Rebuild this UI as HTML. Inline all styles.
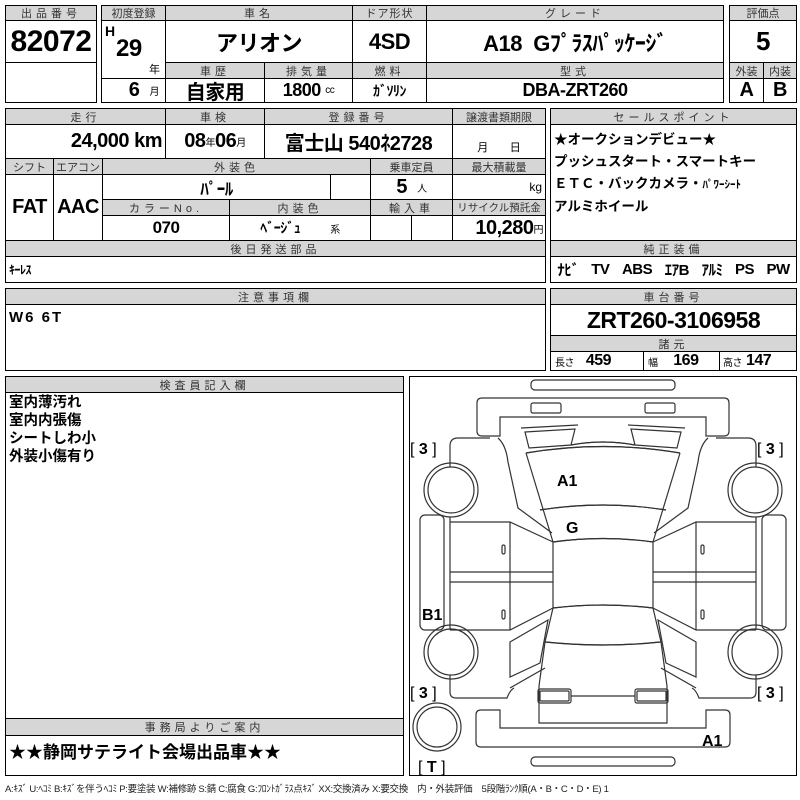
<!DOCTYPE html>
<html><head><meta charset="utf-8"><style>
*{margin:0;padding:0;box-sizing:border-box}
body{width:800px;height:800px;background:#fff;position:relative;overflow:hidden;font-family:"Liberation Sans","Noto Sans CJK JP",sans-serif;color:#000}
.c{position:absolute;border:1px solid #000;background:#fff;display:flex;align-items:center;justify-content:center;white-space:nowrap;overflow:hidden}
.h{background:#d6d6d6;font-size:11px;letter-spacing:4px;color:#333;font-weight:normal}
.v{font-weight:bold;font-size:20px;letter-spacing:-0.5px}
.s{font-size:10px;font-weight:normal}
.l{justify-content:flex-start;align-items:flex-start;padding-left:3px}
</style></head><body>
<!-- block1 -->
<div class="c h" style="left:5px;top:5px;width:92px;height:16px">出品番号</div>
<div class="c v" style="left:5px;top:20px;width:92px;height:43px;font-size:30px">82072</div>
<div class="c" style="left:5px;top:62px;width:92px;height:41px"></div>
<!-- block2 headers -->
<div class="c h" style="left:101px;top:5px;width:65px;height:16px;letter-spacing:0">初度登録</div>
<div class="c h" style="left:165px;top:5px;width:188px;height:16px">車名</div>
<div class="c h" style="left:352px;top:5px;width:75px;height:16px;letter-spacing:1px">ドア形状</div>
<div class="c h" style="left:426px;top:5px;width:298px;height:16px">グレード</div>
<div class="c v" style="left:101px;top:20px;width:65px;height:59px;display:block">
 <span style="position:absolute;left:3px;top:2px;font-size:14px">H</span>
 <span style="position:absolute;left:14px;top:14px;font-size:24px">29</span>
 <span style="position:absolute;left:47px;top:40px;font-size:11px;font-weight:normal">年</span></div>
<div class="c v" style="left:101px;top:78px;width:65px;height:25px;justify-content:flex-end;padding-right:6px">6&nbsp;&nbsp;<span class="s">月</span></div>
<div class="c v" style="left:165px;top:20px;width:188px;height:43px;font-size:22px">アリオン</div>
<div class="c v" style="left:352px;top:20px;width:75px;height:43px;font-size:22px">4SD</div>
<div class="c v" style="left:426px;top:20px;width:298px;height:43px;font-size:22px">A18&nbsp;&nbsp;Gﾌﾟﾗｽﾊﾟｯｹｰｼﾞ</div>
<div class="c h" style="left:165px;top:62px;width:100px;height:17px">車歴</div>
<div class="c h" style="left:264px;top:62px;width:89px;height:17px">排気量</div>
<div class="c h" style="left:352px;top:62px;width:75px;height:17px">燃料</div>
<div class="c h" style="left:426px;top:62px;width:298px;height:17px">型式</div>
<div class="c v" style="left:165px;top:78px;width:100px;height:25px">自家用</div>
<div class="c v" style="left:264px;top:78px;width:89px;height:25px;font-size:18px">1800&nbsp;<span class="s">cc</span></div>
<div class="c v" style="left:352px;top:78px;width:75px;height:25px;font-size:14px">ｶﾞｿﾘﾝ</div>
<div class="c v" style="left:426px;top:78px;width:298px;height:25px;font-size:18px">DBA-ZRT260</div>
<!-- block3 -->
<div class="c h" style="left:729px;top:5px;width:68px;height:16px;letter-spacing:0">評価点</div>
<div class="c v" style="left:729px;top:20px;width:68px;height:43px;font-size:26px">5</div>
<div class="c h" style="left:729px;top:62px;width:35px;height:17px;letter-spacing:0">外装</div>
<div class="c h" style="left:763px;top:62px;width:34px;height:17px;letter-spacing:0">内装</div>
<div class="c v" style="left:729px;top:78px;width:35px;height:25px">A</div>
<div class="c v" style="left:763px;top:78px;width:34px;height:25px">B</div>
<!-- second block -->
<div class="c h" style="left:5px;top:108px;width:161px;height:17px">走行</div>
<div class="c h" style="left:165px;top:108px;width:100px;height:17px">車検</div>
<div class="c h" style="left:264px;top:108px;width:189px;height:17px">登録番号</div>
<div class="c h" style="left:452px;top:108px;width:94px;height:17px;letter-spacing:0">譲渡書類期限</div>
<div class="c v" style="left:5px;top:124px;width:161px;height:35px;justify-content:flex-end;padding-right:3px">24,000 km</div>
<div class="c v" style="left:165px;top:124px;width:100px;height:35px">08<span class="s">年</span>06<span class="s">月</span></div>
<div class="c v" style="left:264px;top:124px;width:189px;height:35px">富士山 540ﾈ2728</div>
<div class="c s" style="left:452px;top:124px;width:94px;height:35px;align-items:flex-end;padding-bottom:3px;font-size:11px">月&nbsp;&nbsp;&nbsp;&nbsp;&nbsp;&nbsp;&nbsp;日</div>
<div class="c h" style="left:5px;top:158px;width:49px;height:17px;letter-spacing:0">シフト</div>
<div class="c h" style="left:53px;top:158px;width:50px;height:17px;letter-spacing:0">エアコン</div>
<div class="c h" style="left:102px;top:158px;width:269px;height:17px">外装色</div>
<div class="c h" style="left:370px;top:158px;width:83px;height:17px;letter-spacing:0">乗車定員</div>
<div class="c h" style="left:452px;top:158px;width:94px;height:17px;letter-spacing:0">最大積載量</div>
<div class="c v" style="left:5px;top:174px;width:49px;height:67px">FAT</div>
<div class="c v" style="left:53px;top:174px;width:50px;height:67px">AAC</div>
<div class="c v" style="left:102px;top:174px;width:229px;height:26px;font-size:17px">ﾊﾟｰﾙ</div>
<div class="c" style="left:330px;top:174px;width:41px;height:26px"></div>
<div class="c v" style="left:370px;top:174px;width:83px;height:26px">5&nbsp;&nbsp;<span class="s">人</span></div>
<div class="c s" style="left:452px;top:174px;width:94px;height:26px;justify-content:flex-end;padding-right:3px;font-size:12px">kg</div>
<div class="c h" style="left:102px;top:199px;width:128px;height:17px">カラーNo.</div>
<div class="c h" style="left:229px;top:199px;width:142px;height:17px">内装色</div>
<div class="c h" style="left:370px;top:199px;width:83px;height:17px">輸入車</div>
<div class="c h" style="left:452px;top:199px;width:94px;height:17px;letter-spacing:0;font-size:10.5px">リサイクル預託金</div>
<div class="c v" style="left:102px;top:215px;width:128px;height:26px;font-size:17px">070</div>
<div class="c v" style="left:229px;top:215px;width:142px;height:26px;font-size:14px">ﾍﾞｰｼﾞｭ<span class="s" style="margin-left:30px">系</span></div>
<div class="c" style="left:370px;top:215px;width:42px;height:26px"></div>
<div class="c" style="left:411px;top:215px;width:42px;height:26px"></div>
<div class="c v" style="left:452px;top:215px;width:94px;height:26px;justify-content:flex-end;padding-right:2px">10,280<span class="s">円</span></div>
<div class="c h" style="left:5px;top:240px;width:541px;height:17px">後日発送部品</div>
<div class="c v l" style="left:5px;top:256px;width:541px;height:27px;font-size:12px;align-items:center">ｷｰﾚｽ</div>
<!-- sale point -->
<div class="c h" style="left:550px;top:108px;width:247px;height:17px">セールスポイント</div>
<div class="c l" style="left:550px;top:124px;width:247px;height:117px;display:block;font-weight:bold;font-size:13.5px;line-height:22px;padding-top:4px">★オークションデビュー★<br>プッシュスタート・スマートキー<br>ＥＴＣ・バックカメラ・<span style="font-size:11px">ﾊﾟﾜｰｼｰﾄ</span><br>アルミホイール</div>
<div class="c h" style="left:550px;top:240px;width:247px;height:17px">純正装備</div>
<div class="c v" style="left:550px;top:256px;width:247px;height:27px;font-size:15px;justify-content:space-around">ﾅﾋﾞ <span>TV</span> <span>ABS</span> <span>ｴｱB</span> <span>ｱﾙﾐ</span> <span>PS</span> <span>PW</span></div>
<!-- chui -->
<div class="c h" style="left:5px;top:288px;width:541px;height:17px">注意事項欄</div>
<div class="c v l" style="left:5px;top:304px;width:541px;height:67px;font-size:15px;padding-top:4px;letter-spacing:2px">W6 6T</div>
<div class="c h" style="left:550px;top:288px;width:247px;height:17px">車台番号</div>
<div class="c v" style="left:550px;top:304px;width:247px;height:32px;font-size:23px">ZRT260-3106958</div>
<div class="c h" style="left:550px;top:335px;width:247px;height:17px">諸元</div>
<div class="c v" style="left:550px;top:351px;width:94px;height:20px;font-size:16px;justify-content:flex-start;padding-left:4px"><span class="s">長さ</span>&nbsp;&nbsp;&nbsp;459</div>
<div class="c v" style="left:643px;top:351px;width:77px;height:20px;font-size:16px;justify-content:flex-start;padding-left:4px"><span class="s">幅</span>&nbsp;&nbsp;&nbsp;&nbsp;169</div>
<div class="c v" style="left:719px;top:351px;width:78px;height:20px;font-size:16px;justify-content:flex-start;padding-left:3px"><span class="s">高さ</span>&nbsp;147</div>
<!-- kensa -->
<div class="c h" style="left:5px;top:376px;width:399px;height:17px">検査員記入欄</div>
<div class="c l" style="left:5px;top:392px;width:399px;height:327px;display:block;font-weight:bold;font-size:14.5px;line-height:18px;padding-top:1px">室内薄汚れ<br>室内内張傷<br>シートしわ小<br>外装小傷有り</div>
<div class="c h" style="left:5px;top:718px;width:399px;height:18px">事務局よりご案内</div>
<div class="c l" style="left:5px;top:735px;width:399px;height:41px;font-weight:bold;font-size:17px;padding-top:2px">★★静岡サテライト会場出品車★★</div>
<!-- diagram -->
<div class="c" style="left:409px;top:376px;width:388px;height:400px"></div>
<svg style="position:absolute;left:0;top:0" width="800" height="800" fill="none" stroke="#333" stroke-width="1.2">
<g id="half">
<path d="M603,417 L500,417 L500,436 L482,436 Q477,436 477,431 L477,403 Q477,398 482,398 L603,398"/>
<rect x="531" y="403" width="30" height="10" rx="2"/>
<path d="M490,438 L458,438 Q450,438 450,446 L450,467"/>
<path d="M498,438 Q506,445 508,462 L518,508 L552,533"/>
<path d="M521,428 L578,425"/>
<path d="M525,432 L575,429 L571,445 L529,448 Z"/>
<path d="M571,445 Q603,439 635,445"/>
<path d="M526,453 Q603,440 680,453"/>
<path d="M526,453 L553,542"/>
<path d="M540,510 Q603,500 666,510"/>
<path d="M553,542 Q603,535 653,542"/>
<circle cx="451" cy="490" r="27"/><circle cx="451" cy="490" r="23"/>
<rect x="420" y="515" width="24" height="115" rx="5"/>
<path d="M450,517 L450,630"/>
<path d="M450,522 L510,522 L553,542"/>
<path d="M510,522 L510,630"/>
<path d="M450,572 L553,572 M450,582 L553,582"/>
<path d="M450,630 L510,630 L553,608"/>
<rect x="502" y="545" width="3" height="9" rx="1.5"/><rect x="502" y="610" width="3" height="9" rx="1.5"/>
<path d="M553,542 L553,608"/>
<path d="M553,608 Q603,602 653,608"/>
<path d="M510,642 L548,620 L540,663 L510,677 Z"/>
<path d="M510,688 L545,668"/>
<path d="M553,608 L545,642 L539,686 L539,723 L603,723"/>
<path d="M545,642 Q603,648 660,642"/>
<circle cx="451" cy="652" r="27"/><circle cx="451" cy="652" r="23"/>
<path d="M450,675 L450,692 Q450,698 456,698 L507,698 Q510,690 514,688"/>
<rect x="538" y="689" width="33" height="14" rx="2"/><rect x="540" y="691" width="29" height="10" rx="1"/>
<path d="M571,696 L603,696"/>
<path d="M603,728 L500,728 L500,710 L481,710 Q476,710 476,715 L476,742 Q476,747 481,747 L603,747"/>
</g>
<use href="#half" transform="translate(1206,0) scale(-1,1)"/>
<rect x="531" y="380" width="144" height="10" rx="4"/>
<rect x="531" y="757" width="144" height="9" rx="4"/>
<circle cx="437" cy="727" r="24"/><circle cx="437" cy="727" r="20"/>
<g fill="#000" stroke="none" font-family="Liberation Sans, sans-serif" font-weight="bold" font-size="16">
<text x="557" y="486">A1</text><text x="566" y="533">G</text><text x="422" y="620">B1</text><text x="702" y="746">A1</text>
<text x="410" y="454" font-weight="normal" xml:space="preserve">[ <tspan font-weight="bold">3</tspan> ]</text>
<text x="757" y="454" font-weight="normal" xml:space="preserve">[ <tspan font-weight="bold">3</tspan> ]</text>
<text x="410" y="698" font-weight="normal" xml:space="preserve">[ <tspan font-weight="bold">3</tspan> ]</text>
<text x="757" y="698" font-weight="normal" xml:space="preserve">[ <tspan font-weight="bold">3</tspan> ]</text>
<text x="418" y="772" font-weight="normal" xml:space="preserve">[ <tspan font-weight="bold">T</tspan> ]</text>
</g>
</svg>
<div style="position:absolute;left:5px;top:781px;font-size:9.5px;color:#222;white-space:nowrap;letter-spacing:-0.3px">A:ｷｽﾞ U:ﾍｺﾐ B:ｷｽﾞを伴うﾍｺﾐ P:要塗装 W:補修跡 S:錆 C:腐食 G:ﾌﾛﾝﾄｶﾞﾗｽ点ｷｽﾞ XX:交換済み X:要交換　内・外装評価　5段階ﾗﾝｸ順(A・B・C・D・E) 1</div>
</body></html>
